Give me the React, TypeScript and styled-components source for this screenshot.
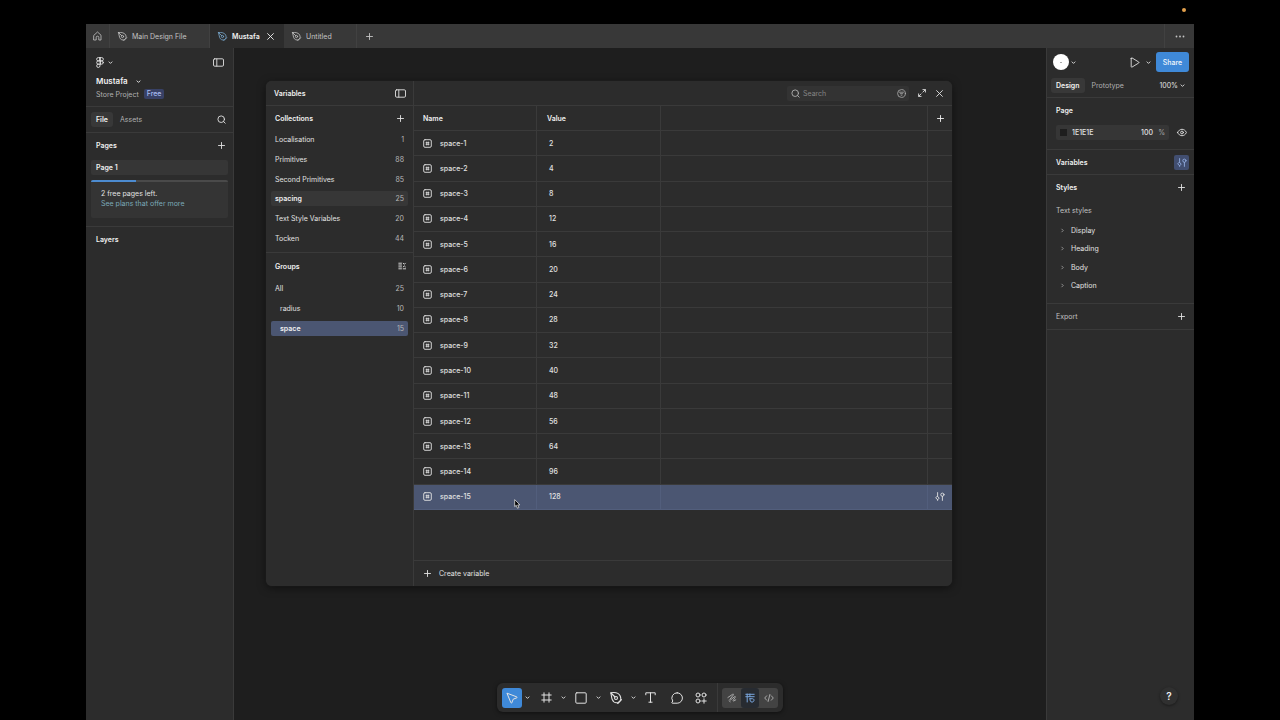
import React from "react";
import styled, { createGlobalStyle, css } from "styled-components";

const c = {
  panel: "#2c2c2c",
  canvas: "#1e1e1e",
  line: "#3a3a3a",
  field: "#363636",
  text: "#e2e2e2",
  strong: "#f0f0f0",
  muted: "#a6a6a6",
  blue: "#3f89d8",
  selected: "#4b5672",
};

const GlobalStyle = createGlobalStyle`
  *, *::before, *::after { box-sizing: border-box; }
  body {
    margin: 0;
    background: #000;
    color: ${c.text};
    font-family: Inter, "Liberation Sans", sans-serif;
    font-size: 7px;
    line-height: 9px;
  }
  button, input {
    margin: 0; padding: 0; border: 0; background: none;
    color: inherit; font: inherit; outline: none;
  }
  h2, h3, p, ul { margin: 0; padding: 0; font: inherit; list-style: none; }
  svg { display: block; flex: none; overflow: visible; }
`;

/* ---------- shell ---------- */

const Screen = styled.div`
  min-height: 100vh;
  display: flex;
  flex-direction: column;
  padding: 0 86px;
`;
const StatusStrip = styled.div`
  height: 24px;
  display: flex;
  justify-content: flex-end;
  padding: 8px 8px 0 0;
`;
const RecordingDot = styled.span`
  width: 4px;
  height: 4px;
  border-radius: 50%;
  background: #e2a04c;
`;
const TabBar = styled.nav`
  height: 24px;
  display: flex;
  background: #383838;
  color: #c4c4c4;
`;
const Tab = styled.div<{ $width: number; $active?: boolean }>`
  width: ${(p) => p.$width}px;
  display: flex;
  align-items: center;
  gap: 5px;
  padding: 0 8px;
  border-right: 1px solid #414141;
  ${(p) =>
    p.$active &&
    css`
      background: ${c.panel};
      color: ${c.strong};
      font-weight: 600;
      border-color: ${c.panel};
    `}
`;
const TabButton = styled.button`
  display: flex;
  align-items: center;
  gap: 5px;
  flex: 1;
  font-weight: inherit;
  white-space: nowrap;
`;
const TabAction = styled.button<{ $width: number; $edge?: "left" | "right" }>`
  width: ${(p) => p.$width}px;
  display: flex;
  align-items: center;
  justify-content: center;
  ${(p) => p.$edge && `border-${p.$edge}: 1px solid #414141;`}
`;
const Spacer = styled.div`
  flex: 1;
`;
const Workspace = styled.div`
  flex: 1;
  display: flex;
  background: ${c.canvas};
`;

/* ---------- shared parts ---------- */

const SidePanel = styled.aside<{ $side: "left" | "right" }>`
  width: 148px;
  flex: none;
  display: flex;
  flex-direction: column;
  background: ${c.panel};
  border-${(p) => (p.$side === "left" ? "right" : "left")}: 1px solid ${c.line};
`;
const Row = styled.div<{ $height: number; $pad?: string; $line?: boolean; $gap?: number }>`
  height: ${(p) => p.$height}px;
  flex: none;
  display: flex;
  align-items: center;
  gap: ${(p) => p.$gap ?? 0}px;
  padding: ${(p) => p.$pad ?? "0 6px 0 10px"};
  ${(p) => p.$line && `border-bottom: 1px solid ${c.line};`}
`;
const Heading = styled.h2<{ $muted?: boolean }>`
  flex: 1;
  font-weight: ${(p) => (p.$muted ? 400 : 600)};
  color: ${(p) => (p.$muted ? "#c0c0c0" : c.strong)};
`;
const IconButton = styled.button<{ $width?: number }>`
  width: ${(p) => p.$width ?? 11}px;
  height: 15px;
  flex: none;
  display: flex;
  align-items: center;
  justify-content: center;
`;
const PillTab = styled.button<{ $active?: boolean }>`
  height: 15px;
  padding: 0 5px;
  border-radius: 3px;
  color: ${(p) => (p.$active ? c.strong : "#b0b0b0")};
  font-weight: ${(p) => (p.$active ? 600 : 400)};
  background: ${(p) => (p.$active ? "#383838" : "none")};
`;

/* ---------- left panel ---------- */

const FileName = styled.button`
  display: flex;
  align-items: center;
  gap: 8px;
  font-size: 8px;
  line-height: 11px;
  font-weight: 600;
  color: ${c.strong};
`;
const ProjectLine = styled.div`
  display: flex;
  align-items: center;
  gap: 5px;
  color: #b0b0b0;
`;
const PlanTag = styled.span`
  height: 10px;
  padding: 0 3px;
  border-radius: 2px;
  background: #384166;
  color: #a9bcf0;
  font-weight: 500;
`;
const FileBlock = styled.div`
  height: 31px;
  flex: none;
  display: flex;
  flex-direction: column;
  align-items: flex-start;
  gap: 2px;
  padding: 0 10px;
  border-bottom: 1px solid ${c.line};
`;
const PageItem = styled.button`
  height: 15px;
  margin: 3px 5px 5px;
  padding: 0 5px;
  border-radius: 2px;
  background: ${c.field};
  color: ${c.strong};
  font-weight: 600;
  text-align: left;
`;
const PlanCard = styled.div`
  height: 38px;
  margin: 0 5px;
  border-radius: 2px;
  overflow: hidden;
  background: #343434;
`;
const Meter = styled.div`
  height: 2px;
  background: #4a4a4a;
`;
const MeterFill = styled.div`
  width: 33%;
  height: 100%;
  background: #4c8bd0;
`;
const PlanText = styled.div`
  padding: 7px 10px;
  line-height: 10px;
`;
const PlanLink = styled.a`
  display: block;
  color: #7ba9b8;
  text-decoration: none;
`;
const LayersRow = styled(Row)`
  margin-top: 8px;
  border-top: 1px solid ${c.line};
`;

/* ---------- canvas and variables window ---------- */

const Canvas = styled.main`
  position: relative;
  flex: 1;
  min-width: 0;
  padding: 33px 94px 0 32px;
`;
const Window = styled.section`
  min-height: 505px;
  display: flex;
  border-radius: 6px;
  overflow: hidden;
  background: ${c.panel};
  box-shadow: 0 2px 8px rgba(0, 0, 0, 0.5), 0 0 1px #444;
`;
const WindowSide = styled.div`
  width: 148px;
  flex: none;
  border-right: 1px solid ${c.line};
`;
const WindowMain = styled.div`
  flex: 1;
  min-width: 0;
  display: flex;
  flex-direction: column;
`;
const List = styled.ul<{ $height: number }>`
  height: ${(p) => p.$height}px;
  display: flex;
  flex-direction: column;
`;
const ListCell = styled.li`
  flex: 1;
  display: flex;
  align-items: center;
  padding: 0 5px;
`;
const ListButton = styled.button<{ $indent?: boolean; $tone?: "quiet" | "selected" }>`
  flex: 1;
  height: 15px;
  display: flex;
  justify-content: space-between;
  align-items: center;
  padding: 0 4px 0 ${(p) => (p.$indent ? 9 : 4)}px;
  border-radius: 2px;
  font-weight: ${(p) => (p.$tone ? 600 : 400)};
  color: ${(p) => (p.$tone ? c.strong : c.text)};
  background: ${(p) => (p.$tone === "selected" ? c.selected : p.$tone ? "#373737" : "none")};
`;
const Count = styled.span`
  color: #b8b8b8;
  font-weight: 400;
`;
const GroupsBlock = styled.div`
  margin-top: 4px;
  border-top: 1px solid ${c.line};
`;
const SearchBox = styled.label`
  width: 122px;
  height: 15px;
  display: flex;
  align-items: center;
  gap: 3px;
  padding: 0 3px 0 4px;
  border-radius: 2px;
  background: #333;
  color: #b0b0b0;
`;
const SearchInput = styled.input`
  flex: 1;
  min-width: 0;
  &::placeholder { color: #858585; opacity: 1; }
`;
const VariableTable = styled.table`
  width: 100%;
  height: 404px;
  table-layout: fixed;
  border-collapse: separate;
  border-spacing: 0;
`;
const Cell = styled.td<{ $first?: boolean }>`
  height: 25px;
  padding: 0 0 0 ${(p) => (p.$first ? 9 : 12)}px;
  border-bottom: 1px solid ${c.line};
  border-right: 1px solid ${c.line};
  font-weight: 500;
  text-align: left;
  &:last-child { border-right: 0; padding: 0; }
`;
const HeadCell = styled(Cell)`
  padding-left: ${(p) => (p.$first ? 9 : 10)}px;
  color: ${c.strong};
  font-weight: 600;
`;
const BodyRow = styled.tr<{ $selected?: boolean }>`
  ${(p) =>
    p.$selected &&
    css`
      background: ${c.selected};
      ${Cell} { border-color: #525e7c; }
    `}
`;
const NameContent = styled.span`
  display: flex;
  align-items: center;
  gap: 8px;
`;
const Centered = styled.span`
  display: flex;
  align-items: center;
  justify-content: center;
`;
const Footer = styled.div`
  height: 26px;
  margin-top: auto;
  display: flex;
  align-items: center;
  padding: 0 10px;
  border-top: 1px solid ${c.line};
`;
const CreateButton = styled.button`
  display: flex;
  align-items: center;
  gap: 8px;
`;
const Pointer = styled.span`
  position: absolute;
  left: 280px;
  top: 451px;
  pointer-events: none;
`;

/* ---------- bottom toolbar ---------- */

const Toolbar = styled.div`
  position: absolute;
  left: 50%;
  bottom: 8px;
  transform: translateX(-50%);
  height: 29px;
  display: flex;
  align-items: center;
  padding: 0 5px;
  border-radius: 6px;
  background: ${c.panel};
  box-shadow: 0 1px 4px rgba(0, 0, 0, 0.5);
`;
const Tool = styled.button<{ $width: number; $active?: boolean }>`
  width: ${(p) => p.$width}px;
  height: 20px;
  display: flex;
  align-items: center;
  justify-content: center;
  border-radius: 3px;
  background: ${(p) => (p.$active ? c.blue : "none")};
`;
const ToolDivider = styled.span`
  width: 1px;
  height: 29px;
  margin: 0 4px;
  background: ${c.line};
`;
const ModeGroup = styled.div`
  height: 20px;
  display: flex;
  border-radius: 3px;
  background: #434343;
  color: #a8a8a8;
`;
const ModeButton = styled.button<{ $active?: boolean }>`
  width: ${(p) => (p.$active ? 18 : 19)}px;
  display: flex;
  align-items: center;
  justify-content: center;
  border-radius: 3px;
  ${(p) => p.$active && "background: #272b31; color: #79a5dc;"}
`;

/* ---------- right panel ---------- */

const Avatar = styled.span`
  width: 16px;
  height: 16px;
  display: flex;
  align-items: center;
  justify-content: center;
  border-radius: 50%;
  background: #fff;
`;
const AvatarMark = styled.span`
  width: 2px;
  height: 1px;
  background: #aaa;
`;
const ShareButton = styled.button`
  width: 33px;
  height: 20px;
  border-radius: 3px;
  background: ${c.blue};
  color: #f2f6fb;
  font-weight: 500;
`;
const ZoomButton = styled.button`
  display: flex;
  align-items: center;
  gap: 2px;
`;
const ColorField = styled.div`
  flex: 1;
  height: 15px;
  display: flex;
  align-items: center;
  padding: 0 4px;
  border-radius: 2px;
  background: ${c.field};
`;
const Swatch = styled.span`
  width: 7px;
  height: 7px;
  margin-right: 5px;
  background: #1e1e1e;
`;
const ValueInput = styled.input<{ $width: number }>`
  width: ${(p) => p.$width}px;
  font-weight: 500;
`;
const Unit = styled.span`
  margin-left: auto;
  color: ${c.muted};
`;
const VariablesToggle = styled.button`
  width: 15px;
  height: 15px;
  display: flex;
  align-items: center;
  justify-content: center;
  border-radius: 2px;
  background: #414e70;
  color: #93aee0;
`;
const StyleList = styled.ul`
  height: 74px;
  display: flex;
  flex-direction: column;
`;
const StyleItem = styled.li`
  flex: 1;
  display: flex;
`;
const StyleButton = styled.button`
  display: flex;
  align-items: center;
  gap: 7px;
  padding-left: 14px;
`;
const ExportRow = styled(Row)`
  margin-top: 8px;
  border-top: 1px solid ${c.line};
`;
const HelpButton = styled.button`
  width: 18px;
  height: 18px;
  margin: auto 16px 15px auto;
  border-radius: 50%;
  background: #303030;
  box-shadow: 0 1px 3px rgba(0, 0, 0, 0.4);
  color: ${c.strong};
  font-size: 10px;
  font-weight: 600;
`;

/* ---------- icons ---------- */

type IconProps = { w: number; h?: number; weight?: number; color?: string; children: React.ReactNode };
const Icon = ({ w, h = w, weight = 0.9, color = "currentColor", children }: IconProps) => (
  <svg width={w} height={h} viewBox={`0 0 ${w} ${h}`} fill="none" stroke={color} strokeWidth={weight} strokeLinecap="round" strokeLinejoin="round" aria-hidden="true">
    {children}
  </svg>
);
const Chevron = () => <Icon w={5} h={5}><path d="M1 1.9 2.5 3.4 4 1.9" /></Icon>;
const SmallArrow = () => <Icon w={3} h={5} weight={0.8} color="#a8a8a8"><path d="M.8 1.1 2.2 2.5.8 3.9" /></Icon>;
const Plus = () => <Icon w={7}><path d="M3.5.5v6M.5 3.5h6" /></Icon>;
const Close = () => <Icon w={7}><path d="m.6.6 5.800 5.800M6.400.6.600 6.400" /></Icon>;
const Home = () => <Icon w={9} h={10} weight={0.8}><path d="M1 4.2 4.5 1 8 4.2V9H5.8V6.5a1.3 1.3 0 0 0-2.6 0V9H1z" /></Icon>;
const PenNib = ({ size = 9, color }: { size?: number; color?: string }) => (
  <svg width={size} height={size} viewBox="0 0 12 12" fill="none" stroke={color ?? "currentColor"} strokeWidth="1.1" strokeLinejoin="round" strokeLinecap="round" aria-hidden="true">
    <path d="M.8.8C4.400.2 8.800.9 10.200 4c.8 1.700.7 3.200.4 4.300L8.500 10.400C6 11.200 3.300 10.200 2.200 7.400 1.300 5.400 1.500 2.800.8.800z" />
    <path d="M1 1l4 4M7.700 11.500l3.800-3.800" />
    <circle cx="6" cy="6" r="1.500" />
  </svg>
);
const Figma = () => (
  <Icon w={8} h={11} weight={0.9}>
    <path d="M4 .6H2.300a1.650 1.650 0 0 0 0 3.300H4zM4 .6h1.700a1.650 1.650 0 0 1 0 3.300H4zM4 3.900H2.300a1.650 1.650 0 0 0 0 3.300H4zM4 7.200H2.300A1.650 1.650 0 1 0 4 8.850z" />
    <circle cx="5.650" cy="5.550" r="1.650" />
  </Icon>
);
const PanelIcon = () => <Icon w={11} h={9}><rect x=".5" y=".8" width="10" height="7.400" rx="1.200" /><path d="M3.800 1v7" /></Icon>;
const Magnifier = () => (
  <Icon w={9}><circle cx="4.200" cy="4.200" r="3.300" /><path d="m6.600 6.600 1.600 1.600" /></Icon>
);
const NumberIcon = () => (
  <Icon w={9}>
    <rect x=".7" y=".7" width="7.600" height="7.600" rx="1.300" />
    <path d="M3.700 3v3M5.300 3v3M3 3.700h3M3 5.300h3" strokeWidth=".8" />
  </Icon>
);
const FilterIcon = () => <Icon w={9} weight={0.8}><circle cx="4.500" cy="4.500" r="3.900" /><path d="M2.500 3.200h4M3.300 4.700h2.400M4.100 6.200h.8" /></Icon>;
const Expand = () => <Icon w={8}><path d="M4.900.6h2.500v2.500M7.200.8 4.900 3.100M3.100 7.400H.6V4.900M.8 7.200l2.300-2.300" /></Icon>;
const GroupIcon = () => <Icon w={8} weight={0.9}><path d="M.8 1.200h2.700M.8 3h2.700M.8 4.900h2.700M.8 6.800h2.700M5.200 6.800h2.400M5.200 1.200l1.100 1.100 1.100-1.100M5.200 4.900l1.100-1 1.100 1" /></Icon>;
const Sliders = () => (
  <Icon w={10} h={9} weight={0.9}>
    <path d="M2.600.6v3.600M7.400 4.400v4M2.600 7.800v.6" />
    <path d="m2.600 4.400 1.600 1.700-1.600 1.700L1 6.100z" /><circle cx="7.400" cy="2.700" r="1.600" />
  </Icon>
);
const Play = () => <Icon w={10} h={11}><path d="M1.200 1.400v8.200c0 .5.400.7.800.500l6.700-4.100c.4-.3.400-.7 0-1L2 .9c-.4-.2-.8 0-.8.500z" /></Icon>;
const Eye = () => <Icon w={10} h={9}><path d="M.6 4.500C1.500 2.400 3.200 1.300 5 1.300s3.500 1.100 4.400 3.200C8.500 6.600 6.800 7.700 5 7.700S1.500 6.600.6 4.500z" /><circle cx="5" cy="4.500" r="1.400" /></Icon>;
const Dots = () => <Icon w={10} h={3}><g fill="currentColor" stroke="none"><circle cx="1.500" cy="1.500" r=".9" /><circle cx="5" cy="1.500" r=".9" /><circle cx="8.500" cy="1.500" r=".9" /></g></Icon>;
const MoveIcon = () => <Icon w={12} weight={1}><path d="m1.300 1.300 9.500 3.600c.5.200.5.700 0 .9L7.200 7.200 5.800 10.800c-.2.500-.7.500-.9 0z" /></Icon>;
const FrameIcon = () => <Icon w={11} weight={1}><path d="M3 .8v9.400M8 .8v9.400M.8 3h9.400M.8 8h9.400" /></Icon>;
const SquareIcon = () => <Icon w={12} weight={1}><rect x=".8" y=".8" width="10.400" height="10.400" rx="1" /></Icon>;
const TextIcon = () => <Icon w={11} weight={1}><path d="M.8 2.800V.8h9.400v2M5.500.8v9.400M3.900 10.200h3.200" /></Icon>;
const CommentIcon = () => <Icon w={12} weight={1}><path d="M6.200.8a5.200 5.200 0 1 1 0 10.400H1.300c-.5 0-.6-.4-.4-.7l.9-1.500A5.200 5.200 0 0 1 6.200.8z" /></Icon>;
const ActionsIcon = () => (
  <Icon w={12} weight={1}>
    <circle cx="3" cy="3" r="2" /><circle cx="9" cy="3" r="2" /><circle cx="3" cy="9" r="2" /><path d="M9 6.800v4.400M6.800 9h4.400" />
  </Icon>
);
const DrawIcon = () => <Icon w={10} weight={1}><path d="M.9 4.500 5.700 1.200c.7-.4 1.100.2.600.8L3 6.200c-.4.600.1 1 .7.600l3.900-3.200c.6-.4 1 0 .6.700L6.200 7.400c-.3.500.1.900.6.600l2-1.200M2 7.700l1.200 1" /></Icon>;
const DesignModeIcon = () => <Icon w={10} weight={1}><path d="M.8 1.300h8.400M.8 3.700h8.400M2.200 1v8M4.900 1v2.700M5 5.700h2.600c2.300.3 1.600 3.400-.6 3.400-1.800 0-2-1.700-2-3.400z" /></Icon>;
const CodeIcon = () => <Icon w={10} weight={1}><path d="M2.700 2.800.7 5l2 2.200M7.300 2.800l2 2.200-2 2.200M5.900 1.500 4.100 8.500" /></Icon>;
const PointerIcon = () => (
  <svg width="7" height="10" viewBox="0 0 7 10" aria-hidden="true">
    <path d="M.7.6v7l1.600-1.300 1.100 2.900 1.500-.6-1.200-2.700h2.200z" fill="#000" stroke="#ddd" strokeWidth=".8" />
  </svg>
);

/* ---------- data ---------- */

const collections: [string, number][] = [
  ["Localisation", 1],
  ["Primitives", 88],
  ["Second Primitives", 85],
  ["spacing", 25],
  ["Text Style Variables", 20],
  ["Tocken", 44],
];
const spaces = [2, 4, 8, 12, 16, 20, 24, 28, 32, 40, 48, 56, 64, 96, 128];
const textStyles = ["Display", "Heading", "Body", "Caption"];

/* ---------- sections ---------- */

const Tabs = () => (
  <TabBar aria-label="Open files">
    <TabAction $width={24} $edge="right" aria-label="Home"><Home /></TabAction>
    <Tab $width={100}><TabButton><PenNib />Main Design File</TabButton></Tab>
    <Tab $width={74} $active>
      <TabButton><PenNib color="#78a8cc" />Mustafa</TabButton>
      <IconButton aria-label="Close tab"><Close /></IconButton>
    </Tab>
    <Tab $width={73}><TabButton><PenNib />Untitled</TabButton></Tab>
    <TabAction $width={25} aria-label="New tab"><Plus /></TabAction>
    <Spacer />
    <TabAction $width={30} $edge="left" aria-label="More"><Dots /></TabAction>
  </TabBar>
);

const LeftPanel = () => (
  <SidePanel $side="left">
    <Row $height={28} $pad="0 9px 0 10px" $gap={4}>
      <IconButton $width={8} aria-label="Main menu"><Figma /></IconButton>
      <Chevron />
      <Spacer />
      <IconButton aria-label="Toggle panel"><PanelIcon /></IconButton>
    </Row>
    <FileBlock>
      <FileName>Mustafa <Chevron /></FileName>
      <ProjectLine>Store Project <PlanTag>Free</PlanTag></ProjectLine>
    </FileBlock>
    <Row $height={26} $line $pad="0 6px 0 5px" $gap={2}>
      <PillTab $active>File</PillTab>
      <PillTab>Assets</PillTab>
      <Spacer />
      <IconButton aria-label="Find"><Magnifier /></IconButton>
    </Row>
    <Row $height={24}>
      <Heading>Pages</Heading>
      <IconButton aria-label="Add page"><Plus /></IconButton>
    </Row>
    <PageItem>Page 1</PageItem>
    <PlanCard>
      <Meter><MeterFill /></Meter>
      <PlanText>
        <p>2 free pages left.</p>
        <PlanLink href="#plans">See plans that offer more</PlanLink>
      </PlanText>
    </PlanCard>
    <LayersRow $height={25}><Heading>Layers</Heading></LayersRow>
  </SidePanel>
);

const VariablesWindow = () => (
  <Window aria-label="Variables">
    <WindowSide>
      <Row $height={25} $line $pad="0 7px 0 8px">
        <Heading>Variables</Heading>
        <IconButton aria-label="Toggle sidebar"><PanelIcon /></IconButton>
      </Row>
      <Row $height={24} $pad="0 7px 0 9px">
        <Heading>Collections</Heading>
        <IconButton aria-label="New collection"><Plus /></IconButton>
      </Row>
      <List $height={118}>
        {collections.map(([name, count]) => (
          <ListCell key={name}>
            <ListButton $tone={name === "spacing" ? "quiet" : undefined}>{name}<Count>{count}</Count></ListButton>
          </ListCell>
        ))}
      </List>
      <GroupsBlock>
        <Row $height={26} $pad="0 6px 0 9px">
          <Heading>Groups</Heading>
          <IconButton aria-label="Group options"><GroupIcon /></IconButton>
        </Row>
        <List $height={59}>
          <ListCell><ListButton>All<Count>25</Count></ListButton></ListCell>
          <ListCell><ListButton $indent>radius<Count>10</Count></ListButton></ListCell>
          <ListCell><ListButton $indent $tone="selected">space<Count>15</Count></ListButton></ListCell>
        </List>
      </GroupsBlock>
    </WindowSide>
    <WindowMain>
      <Row $height={25} $line $pad="0 7px 0 0" $gap={7}>
        <Spacer />
        <SearchBox>
          <Magnifier />
          <SearchInput type="search" placeholder="Search" aria-label="Search variables" />
          <FilterIcon />
        </SearchBox>
        <IconButton aria-label="Expand"><Expand /></IconButton>
        <IconButton aria-label="Close"><Close /></IconButton>
      </Row>
      <VariableTable>
        <colgroup>
          <col width={123} />
          <col width={124} />
          <col />
          <col width={24} />
        </colgroup>
        <thead>
          <tr>
            <HeadCell as="th" $first>Name</HeadCell>
            <HeadCell as="th">Value</HeadCell>
            <HeadCell as="th" />
            <HeadCell as="th"><Centered><IconButton aria-label="Add mode"><Plus /></IconButton></Centered></HeadCell>
          </tr>
        </thead>
        <tbody>
          {spaces.map((value, i) => {
            const selected = i === spaces.length - 1;
            return (
              <BodyRow key={value} $selected={selected}>
                <Cell $first><NameContent><NumberIcon />space-{i + 1}</NameContent></Cell>
                <Cell>{value}</Cell>
                <Cell />
                <Cell>{selected && <Centered><Sliders /></Centered>}</Cell>
              </BodyRow>
            );
          })}
        </tbody>
      </VariableTable>
      <Footer><CreateButton><Plus />Create variable</CreateButton></Footer>
    </WindowMain>
  </Window>
);

const BottomToolbar = () => (
  <Toolbar role="toolbar" aria-label="Tools">
    <Tool $width={20} $active aria-label="Move"><MoveIcon /></Tool>
    <Tool $width={10} aria-label="Move options"><Chevron /></Tool>
    <Tool $width={29} aria-label="Frame"><FrameIcon /></Tool>
    <Tool $width={5} aria-label="Frame options"><Chevron /></Tool>
    <Tool $width={30} aria-label="Rectangle"><SquareIcon /></Tool>
    <Tool $width={5} aria-label="Shape options"><Chevron /></Tool>
    <Tool $width={30} aria-label="Pen"><PenNib size={12} /></Tool>
    <Tool $width={5} aria-label="Pen options"><Chevron /></Tool>
    <Tool $width={29} aria-label="Text"><TextIcon /></Tool>
    <Tool $width={24} aria-label="Comment"><CommentIcon /></Tool>
    <Tool $width={24} aria-label="Actions"><ActionsIcon /></Tool>
    <ToolDivider />
    <ModeGroup>
      <ModeButton aria-label="Draw"><DrawIcon /></ModeButton>
      <ModeButton $active aria-label="Design"><DesignModeIcon /></ModeButton>
      <ModeButton aria-label="Dev mode"><CodeIcon /></ModeButton>
    </ModeGroup>
  </Toolbar>
);

const RightPanel = () => (
  <SidePanel $side="right">
    <Row $height={28} $pad="0 5px 0 6px" $gap={2}>
      <Avatar><AvatarMark /></Avatar>
      <Chevron />
      <Spacer />
      <IconButton $width={12} aria-label="Present"><Play /></IconButton>
      <IconButton aria-label="Present options"><Chevron /></IconButton>
      <ShareButton>Share</ShareButton>
    </Row>
    <Row $height={22} $line $pad="0 9px 3px 4px" $gap={2}>
      <PillTab $active>Design</PillTab>
      <PillTab>Prototype</PillTab>
      <Spacer />
      <ZoomButton>100% <Chevron /></ZoomButton>
    </Row>
    <Row $height={24} $pad="0 10px 0 9px"><Heading>Page</Heading></Row>
    <Row $height={28} $line $pad="0 7px 7px 9px" $gap={7}>
      <ColorField>
        <Swatch />
        <ValueInput $width={69} defaultValue="1E1E1E" aria-label="Page colour" />
        <ValueInput $width={15} defaultValue="100" aria-label="Opacity" />
        <Unit>%</Unit>
      </ColorField>
      <IconButton aria-label="Toggle visibility"><Eye /></IconButton>
    </Row>
    <Row $height={25} $line $pad="0 5px 0 9px">
      <Heading>Variables</Heading>
      <VariablesToggle aria-label="Open variables"><Sliders /></VariablesToggle>
    </Row>
    <Row $height={25} $pad="0 7px 0 9px">
      <Heading>Styles</Heading>
      <IconButton aria-label="Add style"><Plus /></IconButton>
    </Row>
    <Row $height={21} $pad="0 9px"><Heading as="h3" $muted>Text styles</Heading></Row>
    <StyleList>
      {textStyles.map((name) => (
        <StyleItem key={name}><StyleButton><SmallArrow />{name}</StyleButton></StyleItem>
      ))}
    </StyleList>
    <ExportRow $height={27} $line $pad="0 7px 0 9px">
      <Heading $muted>Export</Heading>
      <IconButton aria-label="Add export"><Plus /></IconButton>
    </ExportRow>
    <HelpButton aria-label="Help">?</HelpButton>
  </SidePanel>
);

export default function App() {
  return (
    <Screen>
      <GlobalStyle />
      <StatusStrip><RecordingDot /></StatusStrip>
      <Tabs />
      <Workspace>
        <LeftPanel />
        <Canvas>
          <VariablesWindow />
          <Pointer><PointerIcon /></Pointer>
          <BottomToolbar />
        </Canvas>
        <RightPanel />
      </Workspace>
    </Screen>
  );
}
